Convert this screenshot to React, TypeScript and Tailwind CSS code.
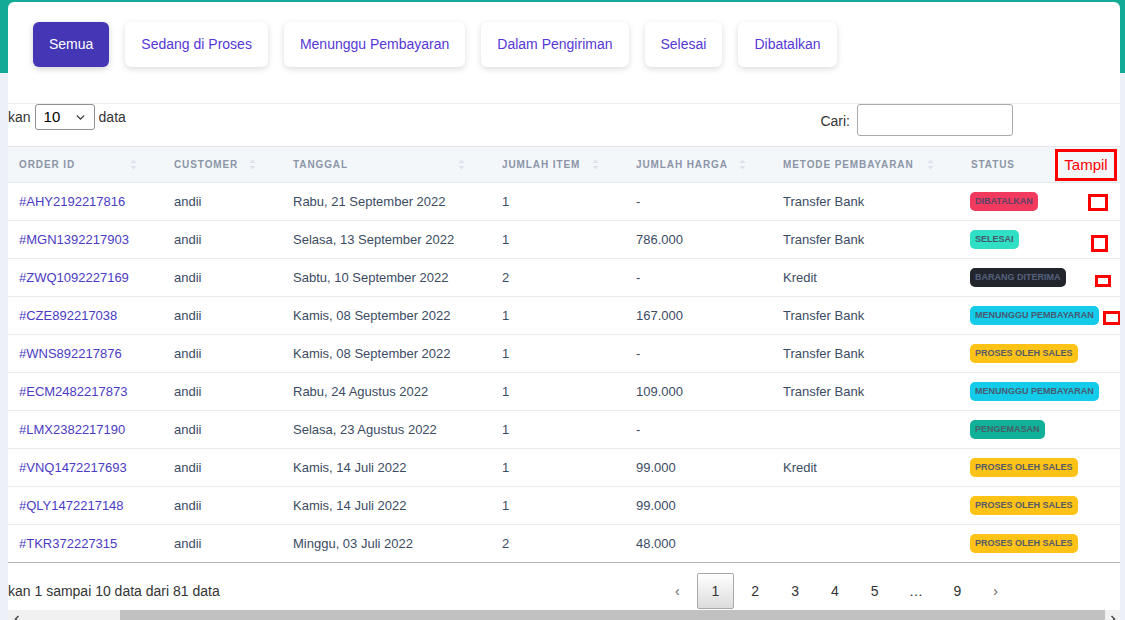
import { ChevronDown } from "lucide-react"

type Status =
  | "DIBATALKAN"
  | "SELESAI"
  | "BARANG DITERIMA"
  | "MENUNGGU PEMBAYARAN"
  | "PROSES OLEH SALES"
  | "PENGEMASAN"

type Order = {
  id: string
  customer: string
  date: string
  items: string
  price: string
  method: string
  status: Status
}

const tabs = ["Semua", "Sedang di Proses", "Menunggu Pembayaran", "Dalam Pengiriman", "Selesai", "Dibatalkan"]

const orders: Order[] = [
  { id: "#AHY2192217816", customer: "andii", date: "Rabu, 21 September 2022", items: "1", price: "-", method: "Transfer Bank", status: "DIBATALKAN" },
  { id: "#MGN1392217903", customer: "andii", date: "Selasa, 13 September 2022", items: "1", price: "786.000", method: "Transfer Bank", status: "SELESAI" },
  { id: "#ZWQ1092227169", customer: "andii", date: "Sabtu, 10 September 2022", items: "2", price: "-", method: "Kredit", status: "BARANG DITERIMA" },
  { id: "#CZE892217038", customer: "andii", date: "Kamis, 08 September 2022", items: "1", price: "167.000", method: "Transfer Bank", status: "MENUNGGU PEMBAYARAN" },
  { id: "#WNS892217876", customer: "andii", date: "Kamis, 08 September 2022", items: "1", price: "-", method: "Transfer Bank", status: "PROSES OLEH SALES" },
  { id: "#ECM2482217873", customer: "andii", date: "Rabu, 24 Agustus 2022", items: "1", price: "109.000", method: "Transfer Bank", status: "MENUNGGU PEMBAYARAN" },
  { id: "#LMX2382217190", customer: "andii", date: "Selasa, 23 Agustus 2022", items: "1", price: "-", method: "", status: "PENGEMASAN" },
  { id: "#VNQ1472217693", customer: "andii", date: "Kamis, 14 Juli 2022", items: "1", price: "99.000", method: "Kredit", status: "PROSES OLEH SALES" },
  { id: "#QLY1472217148", customer: "andii", date: "Kamis, 14 Juli 2022", items: "1", price: "99.000", method: "", status: "PROSES OLEH SALES" },
  { id: "#TKR372227315", customer: "andii", date: "Minggu, 03 Juli 2022", items: "2", price: "48.000", method: "", status: "PROSES OLEH SALES" },
]

const badgeClass: Record<Status, string> = {
  DIBATALKAN: "bg-[#f23a5e] text-[#5a4266]",
  SELESAI: "bg-[#2fe0c4] text-[#46566c]",
  "BARANG DITERIMA": "bg-[#22252b] text-[#56617f]",
  "MENUNGGU PEMBAYARAN": "bg-[#14cbe9] text-[#465a72]",
  "PROSES OLEH SALES": "bg-[#fec316] text-[#555a6a]",
  PENGEMASAN: "bg-[#10b198] text-[#44606a]",
}

// kotak merah penanda di beberapa baris (anotasi)
const marks: Record<number, string> = {
  0: "left-[128px] top-[11px] h-[17px] w-[20px]",
  1: "left-[131px] top-[14px] h-[17px] w-[17px]",
  2: "left-[135px] top-[16px] h-[12px] w-[16px]",
  3: "left-[143px] top-[14px] h-[14px] w-[18px]",
}

function SortIcon() {
  return (
    <svg width="7" height="11" viewBox="0 0 7 11" className="shrink-0">
      <path d="M3.5 0.5 L6.5 4 L0.5 4 Z" fill="#dde2ea" />
      <path d="M3.5 10.5 L6.5 7 L0.5 7 Z" fill="#dde2ea" />
    </svg>
  )
}

function HeaderCell({ label, width, sort = true }: { label: string; width: string; sort?: boolean }) {
  return (
    <div className={`${width} flex shrink-0 items-center justify-between pl-[11px] pr-[26px]`}>
      <span>{label}</span>
      {sort && <SortIcon />}
    </div>
  )
}

export default function App() {
  return (
    <div className="h-[620px] w-full overflow-hidden bg-[linear-gradient(to_bottom,#13ab97_73px,#eef0f7_73px)] font-['Liberation_Sans',Arial,sans-serif]">
      <div className="ml-2 mr-[5px] mt-[2px] flex flex-col overflow-hidden rounded-t-md bg-white">
        {/* Tab filter status */}
        <div className="flex gap-4 pl-[25px] pt-5">
          {tabs.map((tab, i) => (
            <button
              key={tab}
              type="button"
              className={
                i === 0
                  ? "h-[45px] rounded-md bg-[#4436b4] px-4 text-[14px] text-white shadow-[0_2px_6px_rgba(0,0,0,0.18)]"
                  : "h-[45px] rounded-md bg-white px-4 text-[14px] text-[#5637d6] shadow-[0_2px_6px_rgba(0,0,0,0.14)]"
              }
            >
              {tab}
            </button>
          ))}
        </div>

        {/* Kontrol jumlah data dan pencarian */}
        <div className="mt-9 flex items-start justify-between border-t border-[#eceef2] pr-[107px] text-[14px] text-[#333]">
          <div className="flex h-[26px] items-center overflow-hidden">
            <span>kan</span>
            <div className="ml-[4px] flex h-[26px] w-[60px] items-center justify-between rounded-[3px] border border-[#8f8f8f] pl-[8px] pr-[7px]">
              <span className="text-[15px] text-black">10</span>
              <ChevronDown size={13} strokeWidth={2.5} className="text-[#333]" />
            </div>
            <span className="ml-[4px]">data</span>
          </div>
          <div className="flex h-[32px] items-center gap-[7px]">
            <span className="mt-[3px]">Cari:</span>
            <input className="h-[32px] w-[156px] rounded-[3px] border border-[#aaa] bg-white px-2 outline-none" />
          </div>
        </div>

        {/* Tabel pesanan */}
        <div className="mt-[10px] w-[1400px]">
          <div className="flex h-[37px] items-center border-y border-[#e4e8ee] bg-[#f4f7fa] text-[10px] font-bold tracking-[0.9px] text-[#8b95a7]">
            <HeaderCell label="ORDER ID" width="w-[155px]" />
            <HeaderCell label="CUSTOMER" width="w-[119px]" />
            <HeaderCell label="TANGGAL" width="w-[209px]" />
            <HeaderCell label="JUMLAH ITEM" width="w-[134px]" />
            <HeaderCell label="JUMLAH HARGA" width="w-[147px]" />
            <HeaderCell label="METODE PEMBAYARAN" width="w-[188px]" />
            <div className="relative flex h-full w-[200px] shrink-0 items-center pl-[11px]">
              <span>STATUS</span>
              <div className="absolute left-[95px] top-[2px] flex h-[32px] w-[62px] items-center justify-center border-[3px] border-[#ff0000] text-[15px] font-normal tracking-normal text-[#ff0000]">
                Tampil
              </div>
            </div>
          </div>

          {orders.map((o, i) => (
            <div
              key={o.id}
              className={`flex h-[38px] items-center border-b text-[13px] text-[#3c4b64] ${
                i === orders.length - 1 ? "border-[#b4b4b4]" : "border-[#e8eaee]"
              }`}
            >
              <div className="w-[155px] shrink-0 pl-[11px] text-[#4b3bc4]">{o.id}</div>
              <div className="w-[119px] shrink-0 pl-[11px]">{o.customer}</div>
              <div className="w-[209px] shrink-0 pl-[11px]">{o.date}</div>
              <div className="w-[134px] shrink-0 pl-[11px]">{o.items}</div>
              <div className="w-[147px] shrink-0 pl-[11px]">{o.price}</div>
              <div className="w-[188px] shrink-0 pl-[11px]">{o.method}</div>
              <div className="relative flex h-full w-[200px] shrink-0 items-center pl-[10px]">
                <span
                  className={`flex h-[19px] items-center rounded-[5px] px-[5px] text-[9px] font-bold ${badgeClass[o.status]}`}
                >
                  {o.status}
                </span>
                {marks[i] && <div className={`absolute border-[3px] border-[#ff0000] ${marks[i]}`} />}
              </div>
            </div>
          ))}
        </div>

        {/* Info dan paginasi */}
        <div className="flex h-[47px] items-center justify-between pb-[1px] pr-[107px] pt-[10px] text-[14px] text-[#333]">
          <span>kan 1 sampai 10 data dari 81 data</span>
          <div className="flex items-center">
            <span className="ml-[2px] border border-transparent px-[14px] py-[9px] leading-[16px] text-[#666]">‹</span>
            {["1", "2", "3", "4", "5"].map((n) => (
              <span
                key={n}
                className={
                  n === "1"
                    ? "ml-[2px] rounded-[2px] border border-[#a9a9a9] bg-[linear-gradient(to_bottom,#ffffff,#dcdcdc)] px-[14px] py-[9px] leading-[16px]"
                    : "ml-[2px] border border-transparent px-[14px] py-[9px] leading-[16px]"
                }
              >
                {n}
              </span>
            ))}
            <span className="px-[15.5px] leading-[16px]">…</span>
            <span className="border border-transparent px-[14px] py-[9px] leading-[16px]">9</span>
            <span className="ml-[2px] border border-transparent px-[14px] py-[9px] leading-[16px] text-[#666]">›</span>
          </div>
        </div>

        {/* Scrollbar horizontal */}
        <div className="flex h-[17px] bg-[#f1f1f1]">
          <div className="flex w-[17px] shrink-0 items-center justify-center">
            <svg width="8" height="8" viewBox="0 0 8 8">
              <path d="M5.5 1 L2.5 4 L5.5 7" stroke="#505050" strokeWidth="1.6" fill="none" />
            </svg>
          </div>
          <div className="flex flex-1 pl-[95px]">
            <div className="flex-1 bg-[#c1c1c1]" />
          </div>
          <div className="flex w-[15px] shrink-0 items-center justify-center">
            <svg width="8" height="8" viewBox="0 0 8 8">
              <path d="M2.5 1 L5.5 4 L2.5 7" stroke="#505050" strokeWidth="1.6" fill="none" />
            </svg>
          </div>
        </div>
      </div>
    </div>
  )
}
